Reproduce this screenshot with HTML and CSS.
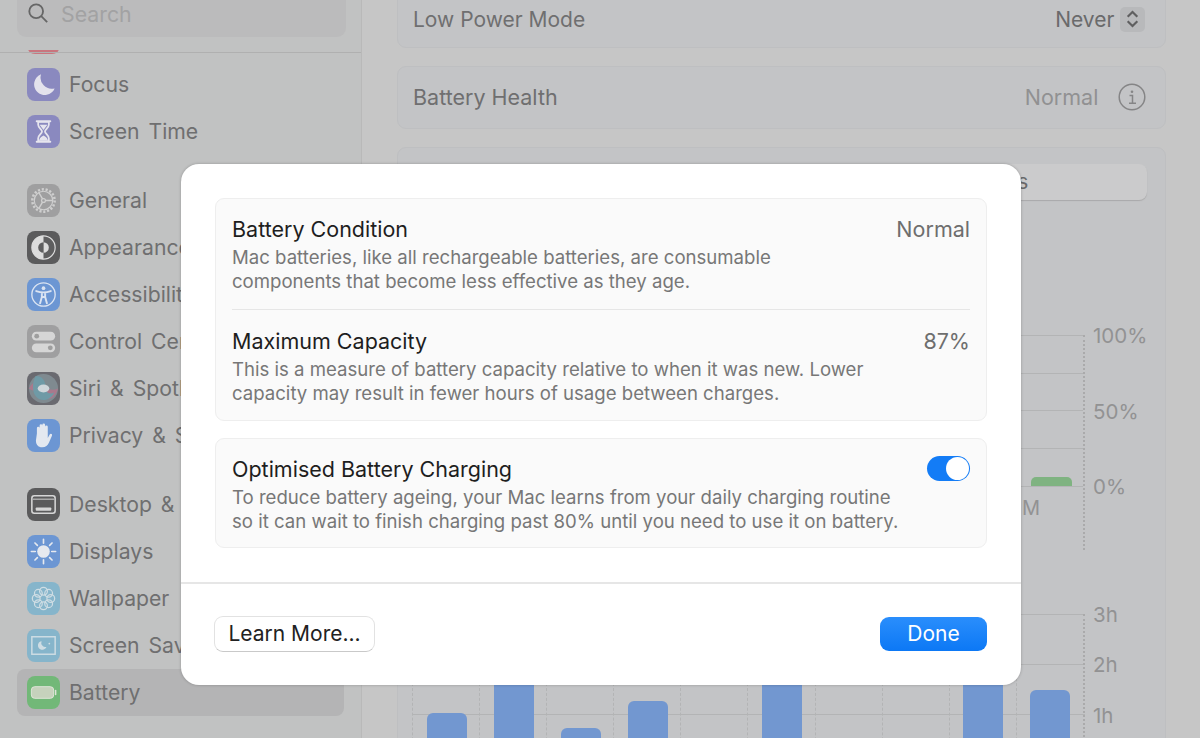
FILE: index.html
```html
<!DOCTYPE html>
<html lang="en">
  <head>
    <meta charset="UTF-8" />
    <title>Battery - System Settings</title>
    <link rel="stylesheet" href="styles.css">
  </head>
  <body>
    <div class="window">
      <aside class="sidebar">
        <div class="side-head">
          <div class="search">
            <svg class="search-icon" viewBox="0 0 24 24"><circle cx="10" cy="10" r="7.5"/><path d="M15.5 15.5 22 22"/></svg>
            <span>Search</span>
          </div>
        </div>

        <div class="side-list">
          <div class="side-group">
            <div class="side-item"><div class="icon red"></div></div>
            <div class="side-item">
              <svg class="icon purple" viewBox="0 0 34 34"><path d="M14.5 6.5a11 11 0 1 0 14 14.5A11.5 11.5 0 0 1 14.5 6.5z" fill="#e3e2ec"/></svg>
              Focus
            </div>
            <div class="side-item">
              <svg class="icon purple" viewBox="0 0 34 34"><path d="M10 6.5h14M10 27.5h14" stroke="#e6e5ee" stroke-width="2" stroke-linecap="round"/><path d="M11.5 7v3c0 3 4 5 4 7s-4 4-4 7v3h11v-3c0-3-4-5-4-7s4-4 4-7V7z" fill="none" stroke="#e6e5ee" stroke-width="1.8"/><path d="M13 10h8l-4 5.5zM12.5 26c.5-3 3-4 4.500-5 1.500 1 4 2 4.500 5z" fill="#e6e5ee"/></svg>
              Screen Time
            </div>
          </div>

          <div class="side-group">
            <div class="side-item">
              <svg class="icon grey" viewBox="0 0 34 34"><circle cx="17" cy="17" r="11.500" fill="none" stroke="#cfcfcf" stroke-width="2.600" stroke-dasharray="2.200 1.800"/><circle cx="17" cy="17" r="9.500" fill="none" stroke="#cfcfcf" stroke-width="1.200"/><circle cx="17" cy="17" r="2" fill="none" stroke="#cfcfcf" stroke-width="1.300"/><path d="M19 17h8M16 15.300 12 8.500M16 18.700 12 25.500" stroke="#cfcfcf" stroke-width="1.500"/></svg>
              General
            </div>
            <div class="side-item">
              <svg class="icon dark" viewBox="0 0 34 34"><circle cx="17" cy="17" r="12" fill="#5e5e5f" stroke="#dcdcdc" stroke-width="1.200"/><path d="M17 5a12 12 0 0 0 0 24z" fill="#dcdcdc"/><path d="M17 11.500a5.500 5.500 0 0 1 0 11z" fill="#dcdcdc"/><path d="M17 11.500a5.500 5.500 0 0 0 0 11z" fill="#5e5e5f"/></svg>
              Appearance
            </div>
            <div class="side-item">
              <svg class="icon blue" viewBox="0 0 34 34"><circle cx="17" cy="17" r="12" fill="none" stroke="#dbe4f2" stroke-width="1.400"/><circle cx="17" cy="10.500" r="1.900" fill="#dbe4f2"/><path d="M9.500 13.500c3 1 4.500 1.300 7.500 1.300s4.500-.3 7.500-1.300M15.300 15v4.500L13.500 26M18.700 15v4.500l1.800 6.500M15.500 19.500h3" fill="none" stroke="#dbe4f2" stroke-width="2" stroke-linecap="round"/></svg>
              Accessibility
            </div>
            <div class="side-item">
              <svg class="icon grey" viewBox="0 0 34 34"><rect x="5" y="7" width="24" height="9" rx="4.500" fill="#d6d6d6"/><rect x="5" y="19" width="24" height="9" rx="4.500" fill="#d6d6d6"/><circle cx="10" cy="11.500" r="2.500" fill="#9e9e9e"/><circle cx="24" cy="23.500" r="2.500" fill="#9e9e9e"/></svg>
              Control Centre
            </div>
            <div class="side-item">
              <svg class="icon siri" viewBox="0 0 34 34"><circle cx="17" cy="17" r="15" fill="#7f8a90"/><path d="M2 17C6 9 11 9 17 14s10 5 15 3c-3 11-10 13-15 8S6 20 2 17z" fill="#a9798c"/><path d="M9 4c7 0 10 5 10 11s4 9 9 6c-3 8-13 10-18 5S5 11 9 4z" fill="#6f9aa6"/><ellipse cx="17" cy="17" rx="6" ry="4" fill="#cfd6da"/></svg>
              Siri &amp; Spotlight
            </div>
            <div class="side-item">
              <svg class="icon blue" viewBox="0 0 34 34"><path d="M10.200 15V9.500a1.400 1.400 0 0 1 2.800 0V15V6.800a1.400 1.400 0 0 1 2.800 0V15V6a1.400 1.400 0 0 1 2.800 0v9V8a1.400 1.400 0 0 1 2.800 0v11.500l1.800-3.300c1-1.700 3.300-.8 2.500 1l-3 7c-1.300 3-3.500 5-7 5-4.500 0-6.500-3-6.500-7z" fill="#e3e8f0"/></svg>
              Privacy &amp; Security
            </div>
          </div>

          <div class="side-group">
            <div class="side-item">
              <svg class="icon dark" viewBox="0 0 34 34"><rect x="5" y="8" width="24" height="18" rx="2.500" fill="none" stroke="#d6d6d6" stroke-width="1.600"/><path d="M6 11.500h22" stroke="#d6d6d6" stroke-width="1"/><rect x="9" y="20" width="16" height="3.500" rx=".8" fill="#d6d6d6"/></svg>
              Desktop &amp; Dock
            </div>
            <div class="side-item">
              <svg class="icon blue" viewBox="0 0 34 34"><circle cx="17" cy="17" r="6.500" fill="#e6e9ef"/><path d="M17 4.500v4M17 25.500v4M4.500 17h4M25.500 17h4M8.200 8.200l2.500 2.500M23.300 23.300l2.500 2.500M8.200 25.800l2.500-2.500M23.300 10.700l2.500-2.500" stroke="#e6e9ef" stroke-width="1.700" stroke-linecap="round"/></svg>
              Displays
            </div>
            <div class="side-item">
              <svg class="icon teal" viewBox="0 0 34 34"><g fill="none" stroke="#cfdde4" stroke-width="1.300"><circle cx="17" cy="9.500" r="4"/><circle cx="17" cy="24.500" r="4"/><circle cx="9.500" cy="17" r="4"/><circle cx="24.500" cy="17" r="4"/><circle cx="11.700" cy="11.700" r="4"/><circle cx="22.300" cy="11.700" r="4"/><circle cx="11.700" cy="22.300" r="4"/><circle cx="22.300" cy="22.300" r="4"/></g></svg>
              Wallpaper
            </div>
            <div class="side-item">
              <svg class="icon teal" viewBox="0 0 34 34"><rect x="5" y="8" width="24" height="18" fill="none" stroke="#cfdde4" stroke-width="1.500"/><path d="M15 12.500a4.500 4.500 0 1 0 5 6 4.500 4.500 0 0 1-5-6z" fill="#cfdde4"/><circle cx="23" cy="15" r=".9" fill="#cfdde4"/></svg>
              Screen Saver
            </div>
            <div class="side-item selected">
              <svg class="icon green" viewBox="0 0 34 34"><rect x="4.500" y="11" width="23" height="12" rx="3.500" fill="#c6d2bc" stroke="#dfe5d8" stroke-width="1"/><path d="M29.500 15v4" stroke="#dfe5d8" stroke-width="1.500" stroke-linecap="round"/></svg>
              Battery
            </div>
          </div>
        </div>
      </aside>

      <main class="content">
        <section class="card row first">
          <span class="row-label">Low Power Mode</span>
          <span class="row-value dark-value">Never</span>
          <span class="stepper">
            <svg viewBox="0 0 14 20"><path d="M2.500 8 7 3.500 11.500 8M2.500 12 7 16.500 11.500 12"/></svg>
          </span>
        </section>

        <section class="card row tall">
          <span class="row-label">Battery Health</span>
          <span class="row-value">Normal</span>
          <svg class="info" viewBox="0 0 28 28"><circle cx="14" cy="14" r="12.800"/><circle class="dot" cx="14" cy="8.800" r="1.300"/><path d="M11.500 12.500H14.500V20M11 20.300h7"/></svg>
        </section>

        <section class="card usage">
          <div class="range-bar">
            <div class="range-btn">Last 10 Days</div>
          </div>

          <div class="chart level-chart">
            <div class="plot level-plot">
              <div class="level-bar"></div>
            </div>
            <div class="y-labels">
              <span>100%</span>
              <span>50%</span>
              <span>0%</span>
            </div>
            <div class="hour-label">12 AM</div>
          </div>

          <div class="chart time-chart">
            <div class="plot time-plot">
              <div class="col"><div class="bar" style="height: 52px"></div></div>
              <div class="col"><div class="bar" style="height: 120px"></div></div>
              <div class="col"><div class="bar" style="height: 37px"></div></div>
              <div class="col"><div class="bar" style="height: 64px"></div></div>
              <div class="col"></div>
              <div class="col"><div class="bar" style="height: 110px"></div></div>
              <div class="col"></div>
              <div class="col"></div>
              <div class="col"><div class="bar" style="height: 130px"></div></div>
              <div class="col"><div class="bar" style="height: 75px"></div></div>
            </div>
            <div class="y-labels">
              <span>3h</span>
              <span>2h</span>
              <span>1h</span>
            </div>
          </div>
        </section>
      </main>

      <div class="dialog">
        <div class="dialog-body">
          <div class="group">
            <div class="info-row">
              <div class="info-head">
                <span class="info-title">Battery Condition</span>
                <span class="info-value">Normal</span>
              </div>
              <p>Mac batteries, like all rechargeable batteries, are consumable<br>components that become less effective as they age.</p>
            </div>
            <div class="info-row">
              <div class="info-head">
                <span class="info-title">Maximum Capacity</span>
                <span class="info-value">87%</span>
              </div>
              <p>This is a measure of battery capacity relative to when it was new. Lower<br>capacity may result in fewer hours of usage between charges.</p>
            </div>
          </div>

          <div class="group">
            <div class="info-row short">
              <div class="info-head">
                <span class="info-title">Optimised Battery Charging</span>
                <span class="toggle"><span class="knob"></span></span>
              </div>
              <p>To reduce battery ageing, your Mac learns from your daily charging routine<br>so it can wait to finish charging past 80% until you need to use it on battery.</p>
            </div>
          </div>
        </div>

        <div class="dialog-foot">
          <button class="btn">Learn More...</button>
          <button class="btn primary">Done</button>
        </div>
      </div>
    </div>
  </body>
</html>
```

FILE: styles.css
```css
* {
  box-sizing: border-box;
}

body {
  margin: 0;
  font-family: Inter, "Noto Sans", sans-serif;
  background: #c6c6c6;
}

.window {
  position: relative;
  display: flex;
  height: 738px;
  overflow: hidden;
}

/* sidebar */
.sidebar {
  width: 362px;
  flex-shrink: 0;
  background: #c1c2c2;
  border-right: 1px solid #b9b9b9;
  color: #6f6f70;
}

.side-head {
  position: relative;
  z-index: 1;
  height: 50px;
  background: #c1c2c2;
}

.side-head::after {
  content: "";
  position: absolute;
  left: 0;
  right: 0;
  bottom: -3px;
  height: 1px;
  background: #b0b0b0;
}

.search {
  display: flex;
  align-items: center;
  gap: 12px;
  height: 47px;
  margin: 0 15px 0 17px;
  padding: 0 10px;
  position: relative;
  top: -10px;
  background: #bbbbbc;
  border-radius: 9px;
  font-size: 21.300px;
  color: #a2a2a3;
}

.search-icon {
  width: 22px;
  height: 22px;
  margin-top: -1px;
  fill: none;
  stroke: #666;
  stroke-width: 2;
}

.side-list {
  margin-top: -36.500px;
  padding: 0 17px;
}

.side-group {
  margin-bottom: 22px;
}

.side-item {
  display: flex;
  align-items: center;
  gap: 9px;
  height: 47px;
  padding-left: 10px;
  font-size: 21.200px;
  word-spacing: 3px;
  white-space: nowrap;
  border-radius: 8px;
}

.side-item.selected {
  background: #b4b4b5;
}

.icon {
  display: block;
  width: 33px;
  height: 33px;
  flex-shrink: 0;
  border-radius: 8px;
}

.red {
  background: #c9757e;
}

.purple {
  background: #8a89bf;
}

.grey {
  background: #9f9fa0;
}

.dark {
  background: #5b5b5c;
}

.blue {
  background: #6c96d3;
}

.siri {
  background: #6a6a70;
}

.teal {
  background: #86b5cb;
}

.green {
  background: #72b878;
}

/* main pane */
.content {
  flex: 1;
  padding: 0 34px 0 35px;
  margin-top: -14px;
}

.card {
  background: #c3c4c6;
  border: 1px solid #bebfc1;
  border-radius: 9px;
  margin-bottom: 18px;
}

.row {
  display: flex;
  align-items: center;
  height: 62px;
  padding: 0 20px 0 15px;
  font-size: 21px;
}

.row.first {
  padding-top: 4px;
}

.row.tall {
  height: 63px;
  padding-right: 19px;
  padding-bottom: 2px;
  font-size: 21.500px;
}

.row-label {
  flex: 1;
  color: #6f6f70;
}

.row-value {
  color: #919192;
}

.dark-value {
  color: #6a6a6b;
}

.stepper {
  display: flex;
  align-items: center;
  justify-content: center;
  width: 25px;
  height: 25px;
  margin-left: 6px;
  background: #b8b9bb;
  border-radius: 5px;
}

.stepper svg {
  width: 15px;
  height: 22px;
  fill: none;
  stroke: #5f5f60;
  stroke-width: 2;
}

.info {
  width: 28px;
  height: 28px;
  margin-left: 20px;
  fill: none;
  stroke: #858586;
  stroke-width: 1.500;
}

.info .dot {
  fill: #858586;
  stroke: none;
}

.usage {
  height: 700px;
  padding: 16px 18px 0 14px;
  margin-bottom: 0;
}

.range-bar {
  display: flex;
  justify-content: flex-end;
}

.range-btn {
  width: 380px;
  height: 36px;
  padding-right: 119px;
  text-align: right;
  line-height: 35px;
  font-size: 21px;
  color: #6a6a6b;
  background: #cbcbcc;
  border-radius: 8px;
  box-shadow: 0 1px 1px #a9a9aa;
}

.chart {
  display: grid;
  grid-template-columns: 673px auto;
  column-gap: 8px;
}

.level-chart {
  margin-top: 135px;
}

.plot {
  border-right: 2px dotted #aaaaab;
}

.level-plot {
  display: flex;
  align-items: flex-end;
  justify-content: flex-end;
  height: 215px;
  padding: 0 11px 64px 0;
  background: repeating-linear-gradient(to bottom, #b3b4b5 0, #b3b4b5 1px, transparent 1px, transparent 37.700px) 0 0 / 100% 152px no-repeat;
}

.level-bar {
  width: 41px;
  height: 9px;
  background: #7fb381;
  border-radius: 5px 5px 0 0;
}

.y-labels {
  display: flex;
  flex-direction: column;
  margin-top: -13px;
  font-size: 20.500px;
  line-height: 28px;
  color: #929293;
}

.level-chart .y-labels {
  gap: 47.500px;
}

.time-chart .y-labels {
  gap: 22.300px;
}

.hour-label {
  grid-column: 1;
  margin-top: -54px;
  padding-right: 43px;
  text-align: right;
  font-size: 20px;
  letter-spacing: 2px;
  color: #929293;
  height: 0;
}

.time-chart {
  margin-top: 64px;
}

.time-plot {
  display: grid;
  grid-template-columns: repeat(10, 1fr);
  height: 151px;
  background: repeating-linear-gradient(to bottom, #b3b4b5 0, #b3b4b5 1px, transparent 1px, transparent 50px);
}

.col {
  display: flex;
  align-items: flex-end;
  justify-content: center;
  border-left: 1px dashed #b3b4b5;
  padding-left: 1px;
}

.bar {
  width: 40px;
  background: #7297d0;
  border-radius: 6px 6px 0 0;
}

/* dialog */
.dialog {
  position: absolute;
  left: 181px;
  top: 164px;
  width: 840px;
  height: 521px;
  background: #fff;
  border-radius: 18px;
  box-shadow: 0 0 3px rgba(0, 0, 0, 0.25);
}

.dialog-body {
  padding: 34px 34px 0 34px;
  height: 420px;
  border-bottom: 2px solid #e6e6e6;
}

.group {
  background: #fafafa;
  border: 1px solid #eeeeee;
  border-radius: 9px;
  padding: 0 16px;
  margin-bottom: 17px;
}

.info-row {
  height: 110px;
  padding-top: 17px;
}

.info-row + .info-row {
  height: 111px;
  padding-top: 18px;
  border-top: 1px solid #e6e6e6;
}

.info-row.short {
  height: 108px;
}

.info-head {
  display: flex;
  justify-content: space-between;
  align-items: center;
  height: 26px;
}

.info-title {
  font-size: 21.500px;
  color: #1e1e1e;
}

.info-value {
  font-size: 21.500px;
  color: #6e6e6e;
}

.info-row p {
  margin: 3px 0 0;
  font-size: 18.600px;
  line-height: 24px;
  color: #777;
}

.toggle {
  display: flex;
  justify-content: flex-end;
  align-items: center;
  width: 43px;
  height: 25px;
  margin-top: -1px;
  padding-right: 1px;
  background: #137cf6;
  border-radius: 13px;
}

.knob {
  width: 23px;
  height: 23px;
  background: #fff;
  border-radius: 50%;
}

.dialog-foot {
  display: flex;
  justify-content: space-between;
  align-items: center;
  padding: 32px 34px 0 33px;
}

.btn {
  height: 36px;
  width: 161px;
  font-family: inherit;
  font-size: 21px;
  color: #222;
  background: #fff;
  border: 1px solid #e2e2e2;
  border-bottom-color: #c9c9c9;
  border-radius: 9px;
  padding: 0 0 2px;
}

.btn.primary {
  width: 107px;
  height: 34px;
  color: #fff;
  background: linear-gradient(#2a8efc, #0c78f5);
  border: none;
}
```
